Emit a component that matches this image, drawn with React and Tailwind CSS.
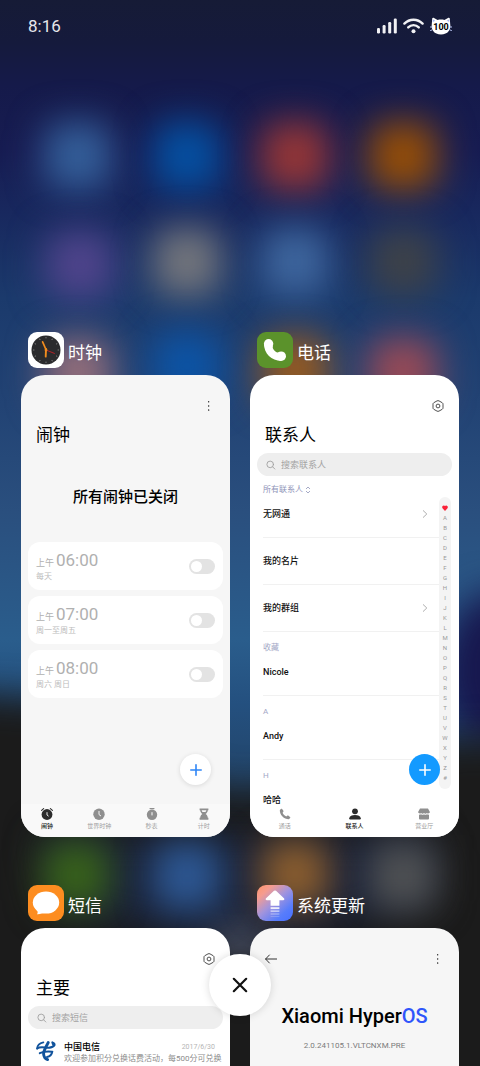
// src/App.jsx
import { useState } from "react";

const FONT = "font-[Roboto,'Noto_Sans_CJK_SC',sans-serif]";

const initialAlarms = [
  { id: 1, time: "06:00", repeat: "每天", on: false },
  { id: 2, time: "07:00", repeat: "周一至周五", on: false },
  { id: 3, time: "08:00", repeat: "周六 周日", on: false },
];

const contactGroups = [
  { label: "收藏", name: "Nicole" },
  { label: "A", name: "Andy" },
  { label: "H", name: "哈哈" },
];

const indexLetters = "ABCDEFGHIJKLMNOPQRSTUVWXYZ#".split("");

// Home screen icons that shine through the blurred wallpaper
const homeIcons = [
  { x: 78, y: 156, color: "#345f9a" },
  { x: 187, y: 156, color: "#0450a2" },
  { x: 295, y: 156, color: "#963636" },
  { x: 403, y: 156, color: "#964e06" },
  { x: 80, y: 265, color: "#50448c" },
  { x: 187, y: 262, color: "#74767c" },
  { x: 295, y: 262, color: "#3e669e" },
  { x: 403, y: 262, color: "#3e4248" },
  { x: 78, y: 372, color: "#946e7a" },
  { x: 187, y: 366, color: "#0c54a6" },
  { x: 295, y: 370, color: "#965a20" },
  { x: 403, y: 372, color: "#9a4a56" },
  { x: 76, y: 875, color: "#38621a" },
  { x: 187, y: 876, color: "#2d5894" },
  { x: 295, y: 874, color: "#8c5e2e" },
  { x: 403, y: 876, color: "#505254" },
];

function Wallpaper() {
  return (
    <svg
      className="absolute inset-0 w-full h-full"
      viewBox="0 0 480 1066"
      preserveAspectRatio="xMidYMid slice"
      aria-hidden="true"
    >
      <defs>
        <linearGradient id="sky" x1="0" y1="0" x2="0" y2="1">
          <stop offset="0" stopColor="#161b36" />
          <stop offset="0.04" stopColor="#151a3c" />
          <stop offset="0.08" stopColor="#151a4a" />
          <stop offset="0.14" stopColor="#171c52" />
          <stop offset="0.2" stopColor="#18285e" />
          <stop offset="0.28" stopColor="#1b3a6c" />
          <stop offset="0.38" stopColor="#224374" />
          <stop offset="0.48" stopColor="#2a4f7e" />
          <stop offset="0.6" stopColor="#2a5d8c" />
          <stop offset="0.66" stopColor="#24507f" />
          <stop offset="1" stopColor="#1b1b1b" />
        </linearGradient>
        <filter id="soft" x="-100%" y="-100%" width="300%" height="300%" colorInterpolationFilters="sRGB">
          <feGaussianBlur stdDeviation="18" />
        </filter>
        <filter id="wide" x="-50%" y="-50%" width="200%" height="200%" colorInterpolationFilters="sRGB">
          <feGaussianBlur stdDeviation="18" />
        </filter>
      </defs>
      <rect width="480" height="1066" fill="url(#sky)" />
      <ellipse cx="500" cy="670" rx="60" ry="80" fill="#17174e" filter="url(#wide)" />
      <path
        d="M-80 690 L60 700 L220 790 L260 790 L420 740 L560 735 V1150 H-80 Z"
        fill="#1b1b1b"
        filter="url(#wide)"
      />
      <path d="M40 835 H430 V900 L240 950 L60 910 Z" fill="#1a2238" filter="url(#wide)" />
      <ellipse cx="240" cy="945" rx="26" ry="20" fill="#505668" filter="url(#soft)" />
      {homeIcons.map((icon) => (
        <rect
          key={`${icon.x}-${icon.y}`}
          x={icon.x - 34}
          y={icon.y - 34}
          width="68"
          height="68"
          rx="18"
          fill={icon.color}
          filter="url(#soft)"
        />
      ))}
    </svg>
  );
}

function StatusBar() {
  return (
    <div className="flex items-center justify-between h-[52px] px-7 text-white">
      <span className="text-[17px] leading-6 text-gray-200">8:16</span>
      <div className="flex items-center gap-1.5">
        {/* Signal */}
        <svg className="w-5 h-4" viewBox="0 0 20 16" fill="#f1f1f4">
          <rect x="0" y="10" width="3" height="5.5" rx="1.2" />
          <rect x="5.6" y="7" width="3" height="8.5" rx="1.2" />
          <rect x="11.2" y="4" width="3" height="11.5" rx="1.2" />
          <rect x="16.8" y="0.5" width="3" height="15" rx="1.2" />
        </svg>
        {/* Wifi */}
        <svg className="w-[21px] h-4" viewBox="0 0 21 16" fill="none" stroke="#f1f1f4" strokeWidth="2.4" strokeLinecap="round">
          <path d="M1.4 5.6 C6.4 0.4 14.6 0.4 19.6 5.6" />
          <path d="M5.2 9.4 C8.2 6.4 12.8 6.4 15.8 9.4" />
          <circle cx="10.5" cy="13.2" r="2" fill="#f1f1f4" stroke="none" />
        </svg>
        {/* Battery with cat ears */}
        <div className="relative flex items-center justify-center w-[22px] h-[18px]">
          <svg className="absolute inset-0 w-full h-full" viewBox="0 0 22 18">
            <path
              d="M2.2 1.4 C2.4 0.6 3.4 0.6 4 1 L7.6 2.9 C9.6 2.5 12.4 2.5 14.4 2.9 L18 1 C18.6 0.6 19.6 0.6 19.8 1.4 L20.2 7 C21.2 12.8 18 17.4 11 17.4 C4 17.4 0.8 12.8 1.8 7 Z"
              fill="#fff"
            />
            <path d="M2.8 5 V2.2 L5.2 3.8 Z M19.2 5 V2.2 L16.8 3.8 Z" fill="#aab8f5" />
            <path d="M0 10 H2.4 M0.2 13.6 L2.4 12.8 M22 10 H19.6 M21.8 13.6 L19.6 12.8" stroke="#b9c4f4" strokeWidth="1" />
          </svg>
          <span className="relative pt-0.5 text-[9px] leading-[10px] font-bold text-black">100</span>
        </div>
      </div>
    </div>
  );
}

/* ---------- app icons ---------- */

function ClockAppIcon() {
  const ticks = [0, 30, 60, 90, 120, 150, 180, 210, 240, 270, 300, 330];
  return (
    <svg className="w-9 h-9" viewBox="0 0 36 36">
      <rect width="36" height="36" rx="9" fill="#fff" />
      <circle cx="18" cy="18" r="14.5" fill="#2b2b2d" />
      {ticks.map((deg) => (
        <path key={deg} d="M18 5 V6.4" stroke="#8d8d8d" strokeWidth="0.8" transform={`rotate(${deg} 18 18)`} />
      ))}
      <path d="M18 18 L26.4 21.4" stroke="#c22026" strokeWidth="0.9" strokeLinecap="round" />
      <path d="M18.2 18 L14.6 9.8" stroke="#f08c1e" strokeWidth="1.7" strokeLinecap="round" />
      <path d="M18 17 L17.7 24.6" stroke="#f08c1e" strokeWidth="1.9" strokeLinecap="round" />
      <circle cx="18" cy="18" r="1.4" fill="#f08c1e" />
    </svg>
  );
}

function PhoneAppIcon() {
  return (
    <svg className="w-9 h-9" viewBox="0 0 36 36">
      <rect width="36" height="36" rx="9" fill="#5b922b" />
      <g fill="#fff">
        <path d="M6.9 11.6 C6.9 21.6 14.6 29 24.2 29 L22.6 20.2 C20.4 22 14.4 17.6 16 13.8 Z" />
        <circle cx="11.6" cy="11.8" r="4.7" />
        <circle cx="24.2" cy="24.2" r="4.8" />
      </g>
    </svg>
  );
}

function MessageAppIcon() {
  return (
    <svg className="w-9 h-9" viewBox="0 0 36 36">
      <rect width="36" height="36" rx="9" fill="#fd8d20" />
      <ellipse cx="18" cy="17.6" rx="13.2" ry="11" fill="#fff" />
      <path d="M8.6 24 C10 26.4 10 28 9 29.2 C12 29.4 15 28.4 17 27 Z" fill="#fff" />
    </svg>
  );
}

function UpdateAppIcon() {
  return (
    <svg className="w-9 h-9" viewBox="0 0 36 36">
      <defs>
        <linearGradient id="update" x1="0" y1="0" x2="0.9" y2="1">
          <stop offset="0" stopColor="#ff9568" />
          <stop offset="0.22" stopColor="#f59c90" />
          <stop offset="0.5" stopColor="#a394dc" />
          <stop offset="0.8" stopColor="#587dfb" />
          <stop offset="1" stopColor="#4a72ff" />
        </linearGradient>
      </defs>
      <rect width="36" height="36" rx="9" fill="url(#update)" />
      <path
        d="M17 5.8 Q18 5 19 5.8 L27.2 13.6 Q28 15 26.4 15.2 H22.4 V20.8 H13.6 V15.2 H9.6 Q8 15 8.8 13.6 Z"
        fill="#fff"
      />
      <g fill="#fff">
        <rect x="13.6" y="22.2" width="8.8" height="1.9" opacity="0.85" />
        <rect x="13.6" y="25.4" width="8.8" height="1.5" opacity="0.6" />
        <rect x="13.6" y="28.4" width="8.8" height="1.2" opacity="0.4" />
        <rect x="13.6" y="31" width="8.8" height="0.9" opacity="0.22" />
      </g>
    </svg>
  );
}

/* ---------- small icons ---------- */

function MoreIcon() {
  return (
    <svg className="w-3 h-3" viewBox="0 0 12 12" fill="#333">
      <rect x="5" y="1" width="1.3" height="1.5" rx="0.4" />
      <rect x="5" y="5.2" width="1.3" height="1.5" rx="0.4" />
      <rect x="5" y="9.3" width="1.3" height="1.5" rx="0.4" />
    </svg>
  );
}

function SettingsIcon() {
  return (
    <svg className="w-3 h-3" viewBox="0 0 12 12" fill="none" stroke="#3c3c3c" strokeWidth="0.9">
      <path
        d="M5 0.9 Q6 0.4 7 0.9 L10.2 2.7 Q11 3.2 11 4.2 V7.8 Q11 8.8 10.2 9.3 L7 11.1 Q6 11.6 5 11.1 L1.8 9.3 Q1 8.8 1 7.8 V4.2 Q1 3.2 1.8 2.7 Z"
      />
      <circle cx="6" cy="6" r="1.9" />
    </svg>
  );
}

function BackIcon() {
  return (
    <svg className="w-3 h-3" viewBox="0 0 12 12" fill="none" stroke="#333" strokeWidth="1" strokeLinecap="round" strokeLinejoin="round">
      <path d="M4.4 2 L0.6 6 L4.4 10 M0.6 6 H11.6" />
    </svg>
  );
}

function PlusIcon({ color }) {
  return (
    <svg className="w-3 h-3" viewBox="0 0 12 12" fill="none" stroke={color} strokeWidth="1.6" strokeLinecap="round">
      <path d="M6 0.8 V11.2 M0.8 6 H11.2" />
    </svg>
  );
}

function ChevronIcon() {
  return (
    <svg className="w-2 h-2" viewBox="0 0 8 8" fill="none" stroke="#a5a5a5" strokeWidth="0.9">
      <path d="M2 0.4 L5.8 4 L2 7.6" />
    </svg>
  );
}

function AlarmTabIcon() {
  return (
    <svg className="w-3 h-3" viewBox="0 0 12 12">
      <circle cx="6" cy="6.5" r="5.4" fill="#2c2c2c" />
      <path d="M0.6 2.4 L2.6 0.7 M11.4 2.4 L9.4 0.7" stroke="#2c2c2c" strokeWidth="1.1" strokeLinecap="round" />
      <path d="M6 4.2 V7 L7.6 8.2" stroke="#fff" strokeWidth="0.9" fill="none" />
    </svg>
  );
}

function WorldTabIcon() {
  return (
    <svg className="w-3 h-3" viewBox="0 0 12 12">
      <circle cx="6" cy="6.2" r="5.7" fill="#8f8f8f" />
      <path d="M6 3 V6.6 L8 8" stroke="#fff" strokeWidth="0.9" fill="none" />
    </svg>
  );
}

function StopwatchTabIcon() {
  return (
    <svg className="w-3 h-3" viewBox="0 0 12 12">
      <circle cx="6" cy="6.8" r="5.2" fill="#8f8f8f" />
      <path d="M4 0.6 H8" stroke="#8f8f8f" strokeWidth="1.1" strokeLinecap="round" />
      <path d="M6 4.2 V7.4" stroke="#fff" strokeWidth="1" />
    </svg>
  );
}

function TimerTabIcon() {
  return (
    <svg className="w-3 h-3" viewBox="0 0 12 12" fill="#8f8f8f">
      <path d="M1.6 0.4 H10.4 V2.2 H9.8 C9.8 4.2 8.4 5.2 7.6 6 C8.4 6.8 9.8 7.6 9.8 9.8 H10.4 V11.8 H1.6 V9.8 H2.2 C2.2 7.6 3.6 6.8 4.4 6 C3.6 5.2 2.2 4.2 2.2 2.2 H1.6 Z" />
      <path d="M3.6 2.2 H8.4 Q8.2 3.4 7.4 4 H4.6 Q3.8 3.4 3.6 2.2 Z" fill="#f9f9f9" />
    </svg>
  );
}

function CallTabIcon() {
  return (
    <svg className="w-3 h-3" viewBox="0 0 12 12" fill="#8f8f8f">
      <path d="M0.8 2.2 C0.8 7 5 11.2 9.8 11.2 L11.2 10 Q11.6 9.4 11 8.9 L9.2 7.6 Q8.6 7.3 8 7.8 L7.3 8.4 C5.8 7.8 4.2 6.2 3.6 4.7 L4.2 4 Q4.7 3.4 4.4 2.8 L3.1 1 Q2.6 0.4 2 0.8 Z" />
    </svg>
  );
}

function PersonTabIcon() {
  return (
    <svg className="w-3 h-3" viewBox="0 0 12 12" fill="#2c2c2c">
      <circle cx="6" cy="3.3" r="2.9" />
      <path d="M0.2 10.2 C0.6 7.8 3 7 6 7 C9 7 11.4 7.8 11.8 10.2 Q11.8 11.4 10.8 11.4 H1.2 Q0.2 11.4 0.2 10.2 Z" />
    </svg>
  );
}

function ShopTabIcon() {
  return (
    <svg className="w-3 h-3" viewBox="0 0 12 12" fill="#8f8f8f">
      <path d="M2 0.6 H10 L11.9 4 C11.9 5.4 9.8 6 8.9 4.9 C8.2 6 6.7 6 6 4.9 C5.3 6 3.8 6 3.1 4.9 C2.2 6 0.1 5.4 0.1 4 Z" />
      <path d="M1 6.6 Q2.4 6.8 3.1 6.2 Q4.6 7.2 6 6.2 Q7.4 7.2 8.9 6.2 Q9.6 6.8 11 6.6 V10.6 Q11 11.6 10 11.6 H2 Q1 11.6 1 10.6 Z" />
    </svg>
  );
}

function TelecomLogo() {
  return (
    <svg className="w-5 h-5" viewBox="0 0 20 20" fill="none" stroke="#11539c" strokeLinecap="round">
      <path d="M1.2 7.6 C1.2 4.4 3.8 2.2 7.4 1.4" strokeWidth="1.7" />
      <path d="M1.2 7.4 C5 4.8 9.4 7.2 13.8 6.6 C19 5.8 19.8 2.6 16.4 1.4" strokeWidth="2.1" />
      <path d="M17 2.6 L18 4.2" strokeWidth="2.6" />
      <path d="M12.2 1.6 C10.8 4.6 7.4 9.4 7.6 13 C7.8 16 9.2 17.8 11.6 18.6" strokeWidth="2.9" />
      <path d="M3.8 12.2 C7.6 10.4 12 10.4 16.2 10.8 C15.8 13.6 13.8 15.4 11 16" strokeWidth="2" />
    </svg>
  );
}

/* ---------- shared pieces ---------- */

function AppWindow({ name, icon, className, children }) {
  return (
    <section className="min-w-0">
      <header className="flex items-center gap-1 pl-[7px] mb-[7px]">
        {icon}
        <h2 className="pt-1.5 text-[17px] leading-6 text-white">{name}</h2>
      </header>
      <div className={`relative flex flex-col h-[462px] rounded-3xl overflow-hidden ${className}`}>{children}</div>
    </section>
  );
}

function WindowHeader({ title, action }) {
  return (
    <div className="px-[15px] pt-5">
      <div className="flex items-center justify-end h-[22px]">{action}</div>
      <h3 className="pt-2 text-[17px] leading-5 text-black">{title}</h3>
    </div>
  );
}

function SearchBox({ id, placeholder }) {
  return (
    <label htmlFor={id} className="flex items-center gap-1 shrink-0 h-[23px] mx-[7px] mt-2 pl-2 rounded-full bg-[#eeeeee]">
      <svg className="w-3 h-3 shrink-0" viewBox="0 0 12 12" fill="none" stroke="#a0a0a0" strokeWidth="0.9" strokeLinecap="round">
        <circle cx="5.2" cy="5.4" r="3.3" />
        <path d="M7.6 7.8 L9.8 10" />
      </svg>
      <input
        id={id}
        type="text"
        placeholder={placeholder}
        className="w-full min-w-0 bg-transparent text-[9px] leading-3 placeholder:text-[#a3a3a3] outline-none"
      />
    </label>
  );
}

function TabBar({ tabs, className }) {
  return (
    <nav className={`flex shrink-0 h-[33px] mt-auto ${className}`}>
      {tabs.map((tab) => (
        <button
          key={tab.label}
          className={`flex flex-1 flex-col items-center gap-0.5 pt-1 text-[6px] leading-2 ${
            tab.active ? "text-[#222] font-medium" : "text-[#a0a0a0]"
          }`}
        >
          {tab.icon}
          {tab.label}
        </button>
      ))}
    </nav>
  );
}

/* ---------- windows ---------- */

function ClockWindow() {
  const [alarms, setAlarms] = useState(initialAlarms);

  const toggleAlarm = (id) => {
    setAlarms(alarms.map((a) => (a.id === id ? { ...a, on: !a.on } : a)));
  };

  return (
    <AppWindow name="时钟" icon={<ClockAppIcon />} className="bg-[#f6f6f6]">
      <WindowHeader title="闹钟" action={<button aria-label="更多"><MoreIcon /></button>} />
      <p className="mt-[41px] mb-[34px] text-center text-[15px] leading-[22px] font-medium text-black">所有闹钟已关闭</p>

      <div className="flex flex-col gap-1.5 px-[7px]">
        {alarms.map((alarm) => (
          <label
            key={alarm.id}
            htmlFor={`alarm-${alarm.id}`}
            className="flex items-center justify-between h-12 px-2 rounded-xl bg-white"
          >
            <span className="block text-[#b0b0b0]">
              <span className="flex items-baseline gap-0.5 text-[17px] leading-[18px]">
                <span className="text-[9px]">上午</span>
                {alarm.time}
              </span>
              <span className="block text-[8px] leading-[10px] text-[#bcbcbc]">{alarm.repeat}</span>
            </span>
            <input
              id={`alarm-${alarm.id}`}
              type="checkbox"
              role="switch"
              checked={alarm.on}
              onChange={() => toggleAlarm(alarm.id)}
              className="appearance-none flex items-center w-[26px] h-[15px] px-0.5 rounded-full bg-[#e3e3e3] checked:bg-[#0d84ff] checked:justify-end before:block before:w-[11px] before:h-[11px] before:rounded-full before:bg-white"
            />
          </label>
        ))}
      </div>

      <button
        aria-label="添加闹钟"
        className="absolute right-[19px] bottom-[52px] flex items-center justify-center w-[31px] h-[31px] rounded-full bg-white shadow-[0_1px_5px_rgba(0,0,0,0.12)]"
      >
        <PlusIcon color="#2f86f6" />
      </button>

      <TabBar
        className="bg-[#f9f9f9]"
        tabs={[
          { label: "闹钟", icon: <AlarmTabIcon />, active: true },
          { label: "世界时钟", icon: <WorldTabIcon /> },
          { label: "秒表", icon: <StopwatchTabIcon /> },
          { label: "计时", icon: <TimerTabIcon /> },
        ]}
      />
    </AppWindow>
  );
}

function PhoneWindow() {
  const rowText = "text-[9px] leading-[14px] font-medium text-[#111]";

  return (
    <AppWindow name="电话" icon={<PhoneAppIcon />} className="bg-white">
      <WindowHeader title="联系人" action={<button aria-label="设置"><SettingsIcon /></button>} />
      <SearchBox id="contact-search" placeholder="搜索联系人" />

      <div className="flex flex-1 min-h-0 overflow-hidden pl-[13px] pr-2">
        <div className="flex-1 min-w-0">
          <button className="flex items-center gap-0.5 pt-2 text-[8px] leading-3 text-[#8f94b8]">
            所有联系人
            <svg className="w-1.5 h-2" viewBox="0 0 6 8" fill="none" stroke="#8f94b8" strokeWidth="0.8">
              <path d="M1 3 L3 1 L5 3 M1 5 L3 7 L5 5" />
            </svg>
          </button>
          <div className="flex items-center justify-between pt-[11px] pb-4 pr-2.5 border-b border-[#f1f1f1]">
            <span className={rowText}>无网通</span>
            <ChevronIcon />
          </div>
          <div className="flex items-center py-4 border-b border-[#f1f1f1]">
            <span className={rowText}>我的名片</span>
          </div>
          <div className="flex items-center justify-between py-4 pr-2.5 border-b border-[#f1f1f1]">
            <span className={rowText}>我的群组</span>
            <ChevronIcon />
          </div>
          {contactGroups.map((group) => (
            <div key={group.label} className="pt-2.5 pb-4 border-b border-[#f1f1f1]">
              <h4 className="text-[8px] leading-3 text-[#a3a7c6]">{group.label}</h4>
              <p className={`pt-[11px] ${rowText}`}>{group.name}</p>
            </div>
          ))}
        </div>

        <div className="flex flex-col items-center self-start w-3 mt-[21px] py-1.5 rounded-full bg-[#f4f4f4] text-[6px] leading-[10px] text-[#9a9a9a]">
          <svg className="w-1.5 h-2.5" viewBox="0 0 6 10" fill="#fa2238">
            <path d="M3 8 L0.5 5.3 C-0.4 3.8 0.8 2.2 2 2.5 Q2.7 2.6 3 3.2 Q3.3 2.6 4 2.5 C5.2 2.2 6.4 3.8 5.5 5.3 Z" />
          </svg>
          {indexLetters.map((letter) => (
            <span key={letter}>{letter}</span>
          ))}
        </div>
      </div>

      <button
        aria-label="新建联系人"
        className="absolute right-[19px] bottom-[52px] flex items-center justify-center w-[31px] h-[31px] rounded-full bg-[#139aff]"
      >
        <PlusIcon color="#fff" />
      </button>

      <TabBar
        className="bg-white"
        tabs={[
          { label: "通话", icon: <CallTabIcon /> },
          { label: "联系人", icon: <PersonTabIcon />, active: true },
          { label: "营业厅", icon: <ShopTabIcon /> },
        ]}
      />
    </AppWindow>
  );
}

function MessageWindow() {
  return (
    <AppWindow name="短信" icon={<MessageAppIcon />} className="bg-white">
      <WindowHeader title="主要" action={<button aria-label="设置"><SettingsIcon /></button>} />
      <SearchBox id="message-search" placeholder="搜索短信" />
      <div className="flex items-start gap-2 mt-3 pl-[15px]">
        <TelecomLogo />
        <div className="flex-1 min-w-0">
          <div className="flex items-center justify-between pr-[15px]">
            <span className="text-[9px] leading-3 font-medium text-black">中国电信</span>
            <time className="text-[7px] leading-3 text-[#b5b5b5]">2017/6/30</time>
          </div>
          <p className="text-[8px] leading-3 text-[#8c8c8c] whitespace-nowrap overflow-hidden">
            欢迎参加积分兑换话费活动，每500分可兑换
          </p>
        </div>
      </div>
    </AppWindow>
  );
}

function UpdateWindow() {
  return (
    <AppWindow name="系统更新" icon={<UpdateAppIcon />} className="bg-[#f6f6f6]">
      <div className="flex items-center justify-between h-[22px] px-[15px] mt-5">
        <button aria-label="返回"><BackIcon /></button>
        <button aria-label="更多"><MoreIcon /></button>
      </div>
      <h3 className="mt-8 text-center text-[20px] leading-7 font-medium text-black">
        Xiaomi Hyper<span className="text-[#2f55fb]">OS</span>
      </h3>
      <p className="mt-2.5 text-center text-[8px] leading-3 text-[#7b7b7b]">2.0.241105.1.VLTCNXM.PRE</p>
    </AppWindow>
  );
}

export default function App() {
  return (
    <div className={`relative h-screen overflow-hidden bg-[#1b1b1b] ${FONT}`}>
      <Wallpaper />
      <div className="relative">
        <StatusBar />
        <main className="grid grid-cols-2 gap-x-5 gap-y-12 px-[21px] pt-[280px]">
          <ClockWindow />
          <PhoneWindow />
          <MessageWindow />
          <UpdateWindow />
        </main>
      </div>

      {/* Clear all */}
      <button
        aria-label="清除全部"
        className="absolute bottom-[50px] left-1/2 -translate-x-1/2 flex items-center justify-center w-[62px] h-[62px] rounded-full bg-white shadow-[0_0_8px_rgba(0,0,0,0.15)]"
      >
        <svg className="w-4 h-4" viewBox="0 0 16 16" fill="none" stroke="#111" strokeWidth="2.2" strokeLinecap="round">
          <path d="M1.8 1.8 L14.2 14.2 M14.2 1.8 L1.8 14.2" />
        </svg>
      </button>
    </div>
  );
}
